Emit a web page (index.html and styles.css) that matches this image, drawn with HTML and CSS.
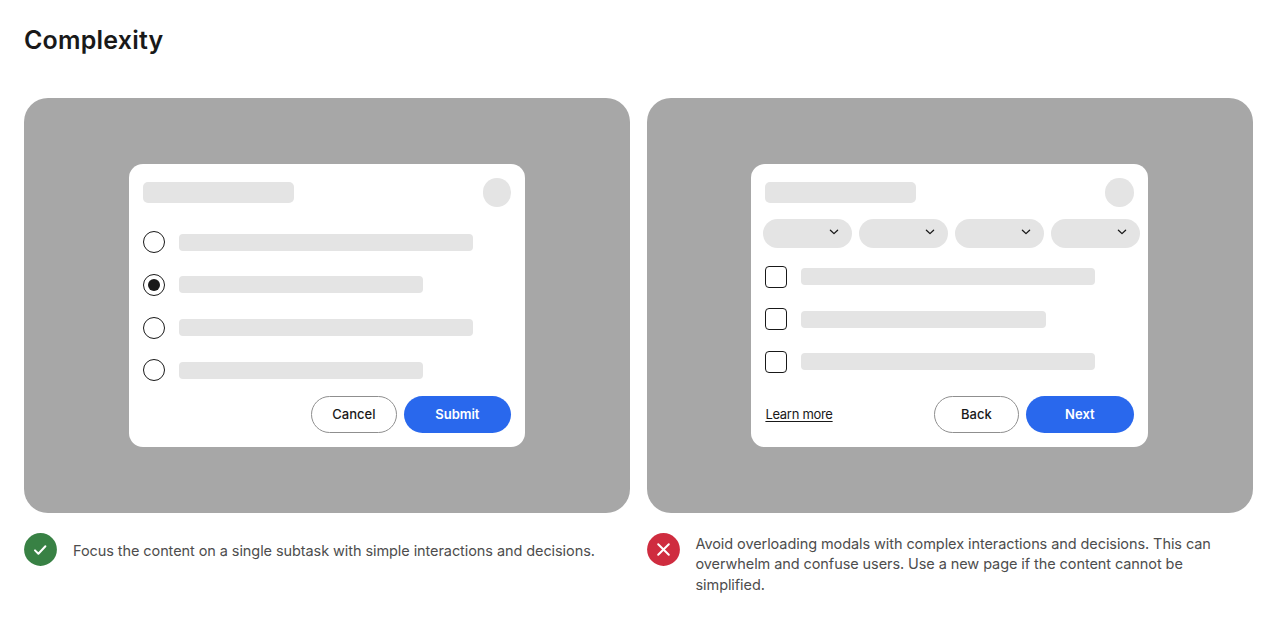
FILE: index.html
```html
<!DOCTYPE html>
<html lang="en">
<head>
    <meta charset="UTF-8">
    <meta name="viewport" content="width=device-width, initial-scale=1.0">
    <title>Complexity</title>
    <link rel="stylesheet" href="styles.css">
</head>
<body>
    <h2>Complexity</h2>
    <div class="examples">
        <div class="example">
            <div class="stage">
                <div class="modal">
                    <div class="modal-header">
                        <div class="title-bar"></div>
                        <div class="close"></div>
                    </div>
                    <div class="options radios">
                        <div class="option"><span class="radio"></span><span class="bar"></span></div>
                        <div class="option"><span class="radio checked"></span><span class="bar short"></span></div>
                        <div class="option"><span class="radio"></span><span class="bar"></span></div>
                        <div class="option"><span class="radio"></span><span class="bar short"></span></div>
                    </div>
                    <div class="modal-footer">
                        <button class="btn cancel">Cancel</button>
                        <button class="btn primary">Submit</button>
                    </div>
                </div>
            </div>
            <div class="caption">
                <svg class="badge" viewBox="0 0 33 33">
                    <circle cx="16.5" cy="16.5" r="16.4" fill="#388144"/>
                    <path d="M11 17.4l3.4 3.4 7-7.6" fill="none" stroke="#fff" stroke-width="2" stroke-linecap="round" stroke-linejoin="round"/>
                </svg>
                <p class="do-text">Focus the content on a single subtask with simple interactions and decisions.</p>
            </div>
        </div>
        <div class="example">
            <div class="stage">
                <div class="modal">
                    <div class="modal-header">
                        <div class="title-bar"></div>
                        <div class="close"></div>
                    </div>
                    <div class="filters">
                        <div class="filter"><svg viewBox="0 0 10 6"><path d="M1.4 1.2L5 4.6l3.6-3.4"/></svg></div>
                        <div class="filter"><svg viewBox="0 0 10 6"><path d="M1.4 1.2L5 4.6l3.6-3.4"/></svg></div>
                        <div class="filter"><svg viewBox="0 0 10 6"><path d="M1.4 1.2L5 4.6l3.6-3.4"/></svg></div>
                        <div class="filter"><svg viewBox="0 0 10 6"><path d="M1.4 1.2L5 4.6l3.6-3.4"/></svg></div>
                    </div>
                    <div class="options checks">
                        <div class="option"><span class="checkbox"></span><span class="bar"></span></div>
                        <div class="option"><span class="checkbox"></span><span class="bar short"></span></div>
                        <div class="option"><span class="checkbox"></span><span class="bar"></span></div>
                    </div>
                    <div class="modal-footer">
                        <a class="learn">Learn more</a>
                        <button class="btn back">Back</button>
                        <button class="btn primary">Next</button>
                    </div>
                </div>
            </div>
            <div class="caption">
                <svg class="badge" viewBox="0 0 33 33">
                    <circle cx="16.5" cy="16.5" r="16.4" fill="#cf2c3f"/>
                    <path d="M11.2 11.2l10.6 10.6M21.8 11.2L11.2 21.8" fill="none" stroke="#fff" stroke-width="2" stroke-linecap="round"/>
                </svg>
                <p>Avoid overloading modals with complex interactions and decisions. This can<br>overwhelm and confuse users. Use a new page if the content cannot be<br>simplified.</p>
            </div>
        </div>
    </div>
</body>
</html>
```
FILE: styles.css
```css
* {
    box-sizing: border-box;
}
body {
    margin: 0;
    padding: 24px 24px 0;
    font-family: Inter, "Liberation Sans", sans-serif;
    background: #fff;
    color: #191919;
}
h2 {
    margin: 0 0 42px;
    font-size: 25px;
    line-height: 32px;
    font-weight: 600;
    letter-spacing: 0.2px;
}
.examples {
    display: flex;
    gap: 16.5px;
}
.example {
    width: 606px;
}
.stage {
    height: 415px;
    padding-top: 66.4px;
    border-radius: 24px;
    background: #a7a7a7;
}
.modal {
    display: flex;
    flex-direction: column;
    width: 396.6px;
    height: 282.5px;
    margin: 0 auto;
    padding: 14px 14.2px;
    border-radius: 14px;
    background: #fff;
}
.modal-header {
    display: flex;
    justify-content: space-between;
    align-items: center;
    height: 28.5px;
}
.title-bar {
    width: 151px;
    height: 21.5px;
    border-radius: 5px;
    background: #e4e4e4;
}
.close {
    width: 28.5px;
    height: 28.5px;
    border-radius: 50%;
    background: #e4e4e4;
}
.options {
    display: flex;
    flex-direction: column;
    gap: 20.7px;
}
.radios {
    margin-top: 24.4px;
}
.checks {
    margin-top: 17.8px;
}
.option {
    display: flex;
    align-items: center;
    gap: 14px;
    height: 22px;
}
.radio,
.checkbox {
    width: 22px;
    height: 22px;
    border: 1.4px solid #191919;
}
.radio {
    display: flex;
    justify-content: center;
    align-items: center;
    border-radius: 50%;
}
.radio.checked::after {
    content: "";
    width: 12px;
    height: 12px;
    border-radius: 50%;
    background: #191919;
}
.checkbox {
    border-radius: 4px;
}
.bar {
    width: 294px;
    height: 17px;
    border-radius: 4px;
    background: #e4e4e4;
}
.bar.short {
    width: 244.4px;
}
.filters {
    display: flex;
    gap: 7.3px;
    margin: 12.4px -6px 0 -2.4px;
}
.filter {
    width: 88.7px;
    height: 28.5px;
    flex: none;
    padding: 10px 0 0 66px;
    border-radius: 15px;
    background: #e4e4e4;
}
.filter svg {
    display: block;
    width: 10px;
    height: 6px;
    fill: none;
    stroke: #191919;
    stroke-width: 1.3;
    stroke-linecap: round;
    stroke-linejoin: round;
}
.modal-footer {
    display: flex;
    justify-content: flex-end;
    align-items: center;
    gap: 7px;
    margin-top: auto;
}
.btn {
    width: 85.5px;
    height: 37px;
    padding: 0;
    border: 1px solid #8f8f8f;
    border-radius: 19px;
    background: #fff;
    color: #191919;
    font-family: inherit;
    font-size: 13px;
    font-weight: 500;
}
.btn.primary {
    width: 107.5px;
    border: none;
    background: #2968ed;
    color: #fff;
    font-weight: 600;
}
.learn {
    margin-right: auto;
    font-size: 13px;
    letter-spacing: -0.3px;
    text-decoration: underline;
    text-underline-offset: 2px;
}
.caption {
    display: flex;
    gap: 16px;
    margin-top: 20.4px;
}
.badge {
    width: 33px;
    height: 33px;
    flex: none;
}
.caption p {
    margin: 0.4px 0 0;
    font-size: 14.5px;
    line-height: 20.5px;
    letter-spacing: -0.08px;
    color: #4d4d4d;
    white-space: nowrap;
}
.caption .do-text {
    line-height: 33px;
}
```
